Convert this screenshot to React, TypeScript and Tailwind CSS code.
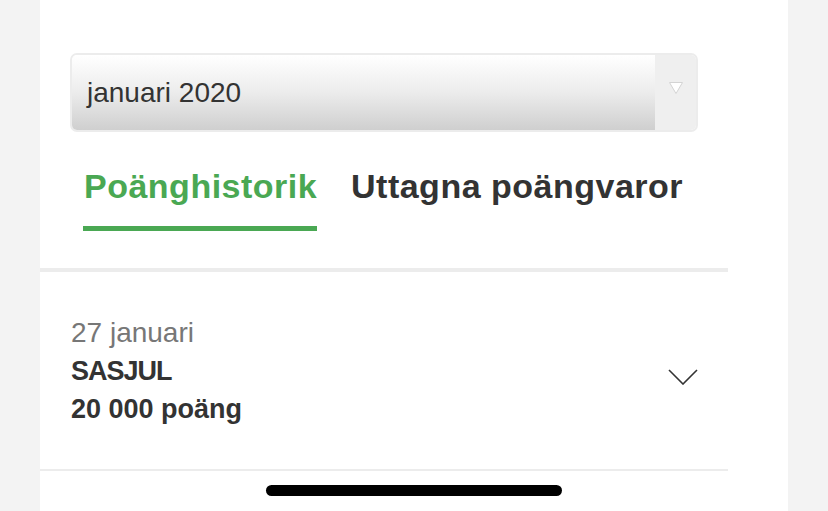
import React from "react";

export default function App() {
  return (
    <div
      className="relative h-[511px] w-[828px] overflow-hidden bg-[#f3f3f3]"
      style={{ fontFamily: '"Liberation Sans", Arial, sans-serif' }}
    >
      <div className="ml-[40px] h-[511px] w-[748px] bg-white">
        <div className="w-[688px]">
          <div className="px-[30px] pt-[53px]">
            <div className="flex h-[79px] w-[628px] overflow-hidden rounded-[7px] border-2 border-[#ececec]">
              <div className="flex flex-1 items-center bg-gradient-to-b from-[#ffffff] via-[#ececec] to-[#cfcfcf] pl-[15px] text-[28px] leading-none text-[#333333]">
                januari 2020
              </div>
              <div className="flex w-[41px] items-center justify-center bg-[#efefef]">
                <svg width="16" height="14" viewBox="0 0 16 14" className="-mt-[10px]">
                  <path d="M1.5 1.5 L14.5 1.5 L8 12.5 Z" fill="#ffffff" stroke="#d4d4d4" strokeWidth="1" />
                </svg>
              </div>
            </div>
          </div>

          <div className="mt-[37px] flex gap-[34px] pl-[43px]">
            <div className="flex w-[234px] flex-col">
              <div className="whitespace-nowrap px-[1px] text-[34px] font-bold leading-[34px] tracking-[0.5px] text-[#4aa853]">Poänghistorik</div>
              <div className="mt-[23px] h-[5px] w-[234px] bg-[#4aa853]" />
            </div>
            <div className="whitespace-nowrap text-[34px] font-bold leading-[34px] tracking-[0.5px] text-[#333333]">Uttagna poängvaror</div>
          </div>

          <div className="mt-[37px] h-[4px] bg-[#ececec]" />

          <div className="flex items-center justify-between pb-[41px] pl-[31px] pr-[30px] pt-[42px]">
            <div className="flex flex-col">
              <div className="text-[28px] leading-[38px] text-[#777777]">27 januari</div>
              <div className="text-[27px] font-bold leading-[38px] tracking-[-1px] text-[#333333]">SASJUL</div>
              <div className="text-[27px] font-bold leading-[38px] text-[#333333]">20 000 poäng</div>
            </div>
            <svg width="30" height="16" viewBox="0 0 30 16" className="mt-[12px]">
              <path d="M1 1 L15 15 L29 1" fill="none" stroke="#333333" strokeWidth="1.6" />
            </svg>
          </div>

          <div className="h-[2px] bg-[#ececec]" />
        </div>
      </div>

      <div className="absolute left-[266px] top-[485px] h-[11px] w-[296px] rounded-full bg-black" />
    </div>
  );
}
